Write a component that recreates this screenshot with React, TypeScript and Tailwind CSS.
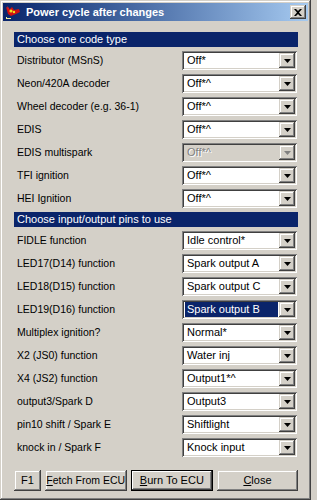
import React from 'react';

interface Row {
  label: string;
  value: string;
  disabled?: boolean;
  selected?: boolean;
}

const codeRows: Row[] = [
  { label: 'Distributor (MSnS)', value: 'Off*' },
  { label: 'Neon/420A decoder', value: 'Off*^' },
  { label: 'Wheel decoder (e.g. 36-1)', value: 'Off*^' },
  { label: 'EDIS', value: 'Off*^' },
  { label: 'EDIS multispark', value: 'Off*^', disabled: true },
  { label: 'TFI ignition', value: 'Off*^' },
  { label: 'HEI Ignition', value: 'Off*^' },
];

const pinRows: Row[] = [
  { label: 'FIDLE function', value: 'Idle control*' },
  { label: 'LED17(D14) function', value: 'Spark output A' },
  { label: 'LED18(D15) function', value: 'Spark output C' },
  { label: 'LED19(D16) function', value: 'Spark output B', selected: true },
  { label: 'Multiplex ignition?', value: 'Normal*' },
  { label: 'X2 (JS0) function', value: 'Water inj' },
  { label: 'X4 (JS2) function', value: 'Output1*^' },
  { label: 'output3/Spark D', value: 'Output3' },
  { label: 'pin10 shift / Spark E', value: 'Shiftlight' },
  { label: 'knock in / Spark F', value: 'Knock input' },
];

const raised =
  'shadow-[inset_-1px_-1px_#404040,inset_1px_1px_#d4d0c8,inset_-2px_-2px_#808080,inset_2px_2px_#ffffff]';

const Combo: React.FC<{ value: string; disabled?: boolean; selected?: boolean }> = ({ value, disabled, selected }) => (
  <div
    className={`flex h-[19px] w-[115px] items-stretch p-[2px] ${
      disabled ? 'bg-[#d4d0c8]' : 'bg-white'
    } shadow-[inset_1px_1px_#808080,inset_-1px_-1px_#ffffff,inset_2px_2px_#404040,inset_-2px_-2px_#d4d0c8]`}
  >
    <div className="flex flex-1 items-center pl-[1px] pr-[1px]">
      <div
        className={`flex h-full w-full items-center whitespace-nowrap pl-[2px] text-[11px] leading-none ${
          selected ? 'bg-[#0a246a] text-white' : disabled ? 'text-[#808080] [text-shadow:1px_1px_#ffffff]' : 'text-black'
        }`}
      >
        {value}
      </div>
    </div>
    <div className={`flex w-[16px] items-center justify-center bg-[#d4d0c8] ${raised}`}>
      <svg width="7" height="4" viewBox="0 0 7 4">
        <polygon points="0,0 7,0 3.5,4" fill={disabled ? '#808080' : '#000000'} />
      </svg>
    </div>
  </div>
);

const Section: React.FC<{ title: string; rows: Row[] }> = ({ title, rows }) => (
  <div>
    <div className="flex h-[15px] items-center bg-[#0a246a] pl-[3px] text-[11px] leading-none text-white">{title}</div>
    <div className="py-[2px]">
      {rows.map((r) => (
        <div key={r.label} className="flex h-[23px] items-center justify-between pl-[3px] pr-[1px]">
          <span className="whitespace-nowrap">{r.label}</span>
          <Combo value={r.value} disabled={r.disabled} selected={r.selected} />
        </div>
      ))}
    </div>
  </div>
);

const Btn: React.FC<{ w: string; def?: boolean; children: React.ReactNode }> = ({ w, def, children }) => (
  <div
    className={`flex h-[21px] ${w} items-center justify-center whitespace-nowrap bg-[#d4d0c8] ${
      def
        ? 'shadow-[inset_0_0_0_1px_#000000,inset_-2px_-2px_#404040,inset_2px_2px_#ffffff,inset_-3px_-3px_#808080]'
        : raised
    }`}
  >
    {children}
  </div>
);

export default function App() {
  return (
    <div className="h-[500px] w-[317px] bg-[#d4d0c8] font-['Liberation_Sans',Arial,sans-serif] text-[10.5px] text-black">
      <div className="flex h-[500px] w-[311px] flex-col bg-[#d4d0c8] p-[3px] shadow-[inset_-1px_-1px_#404040,inset_1px_1px_#d4d0c8,inset_-2px_-2px_#808080,inset_2px_2px_#ffffff]">
        {/* title bar */}
        <div className="flex h-[18px] items-center bg-gradient-to-r from-[#0a246a] to-[#a6caf0] pl-[2px] pr-[2px]">
          <svg width="16" height="16" viewBox="0 0 16 16" className="mr-[5px]">
            <path d="M1 3 L5 5 L7 3 L9 6 L14 5 L15 8 L11 10 L6 12 L3 10 Z" fill="#d01010" />
            <path d="M2 2 L4 4 L3 6 Z" fill="#e82020" />
            <circle cx="6" cy="7" r="1.6" fill="#f0e020" />
            <circle cx="9" cy="8" r="1.2" fill="#f0e020" />
            <rect x="2" y="14" width="4" height="1" fill="#f0f0a0" />
            <rect x="1" y="13" width="1" height="2" fill="#f0f0a0" />
          </svg>
          <span className="flex-1 text-[11px] font-bold leading-none text-white">Power cycle after changes</span>
          <div className={`flex h-[14px] w-[16px] items-center justify-center bg-[#d4d0c8] ${raised}`}>
            <svg width="8" height="7" viewBox="0 0 8 7">
              <path d="M0 0 H2 L4 2 L6 0 H8 L5 3.5 L8 7 H6 L4 5 L2 7 H0 L3 3.5 Z" fill="#000000" />
            </svg>
          </div>
        </div>

        {/* content */}
        <div className="flex flex-col pl-[11px] pr-[10px] pt-[11px]">
          <Section title="Choose one code type" rows={codeRows} />
          <Section title="Choose input/output pins to use" rows={pinRows} />

          <div className="mt-[9px] flex gap-[4px] text-[11px]">
            <Btn w="w-[27px]">F1</Btn>
            <Btn w="w-[83px]">
              <span className="text-[10.5px]">
                <span className="underline">F</span>etch From ECU
              </span>
            </Btn>
            <Btn w="w-[83px]" def>
              <span>
                <span className="underline">B</span>urn To ECU
              </span>
            </Btn>
            <Btn w="w-[82px]">
              <span>
                <span className="underline">C</span>lose
              </span>
            </Btn>
          </div>
        </div>
      </div>
    </div>
  );
}
